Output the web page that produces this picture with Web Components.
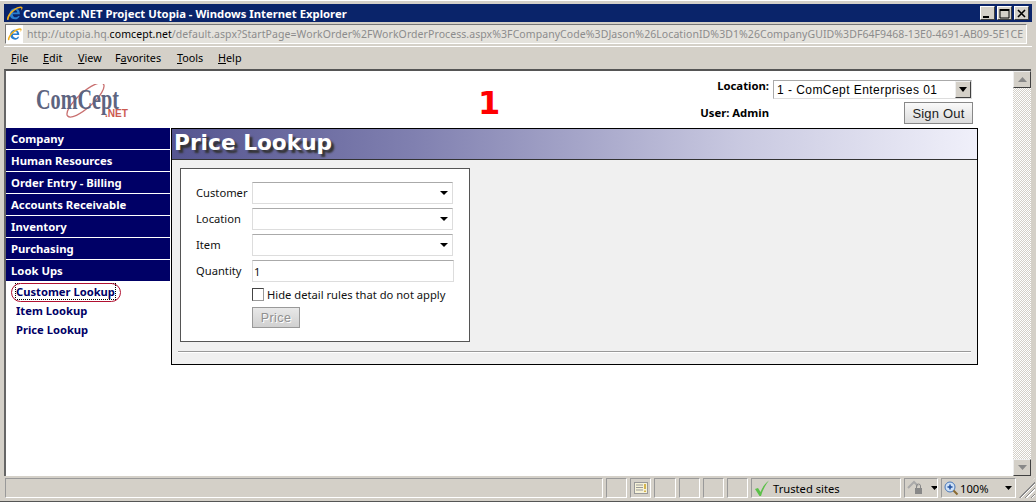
<!DOCTYPE html>
<html>
<head>
<meta charset="utf-8">
<title>Price Lookup</title>
<style>
  html, body { margin: 0; height: 502px; overflow: hidden; background: #d4d0c8; }
</style>
</head>
<body>
<ie-window>
  <cc-header></cc-header>
  <div style="display:flex; align-items:flex-start;">
    <cc-nav></cc-nav>
    <cc-panel heading="Price Lookup"><price-form></price-form></cc-panel>
  </div>
</ie-window>

<script>
const UI_FONT = '"Noto Sans", "DejaVu Sans", sans-serif';

const IE_ICON = (size) => `
  <svg width="${size}" height="${size}" viewBox="0 0 16 16">
    <path d="M3.400 9.400C3 5.600 5.400 3 8.400 3c2.900 0 4.700 2.200 4.700 5.600H6.300c.1 1.900 1.200 3 2.800 3 1.100 0 1.900-.5 2.500-1.300h1.300C12 12.600 10.500 13.500 8.700 13.500c-3 0-4.800-1.700-5.300-4.100zM6.300 7h4.300c-.1-1.500-.9-2.400-2.100-2.400S6.500 5.500 6.300 7z" fill="#2a7fd0"/>
    <path d="M1 13.800C.4 11 4.500 4.800 10.500 2.200c2.500-1.100 4.500-1.200 5-.2.3.700-.2 2-1.100 3.200.2-1.100.1-1.900-.3-2.200-1.600-1-8 2.600-10.400 7-1 1.800-1.300 3-1 3.700-.6.400-1.400.6-1.700.1z" fill="#f0b020"/>
  </svg>`;

class IeWindow extends HTMLElement {
  constructor() {
    super();
    this.attachShadow({ mode: 'open' });
    const menus = ['<u>F</u>ile:32', '<u>E</u>dit:35', '<u>V</u>iew:37', 'F<u>a</u>vorites:62', '<u>T</u>ools:41', '<u>H</u>elp:30'];
    const menuHtml = menus.map(m => {
      const [label, w] = m.split(':');
      return `<span style="width:${w}px">${label}</span>`;
    }).join('');
    this.shadowRoot.innerHTML = `
      <style>
        :host { display: flex; flex-direction: column; width: 1036px; height: 502px; box-sizing: border-box;
          padding: 3px 4px 3px 4px; background: #d4d0c8; font-family: ${UI_FONT};
          border-top: 1px solid #fff; border-bottom: 1px solid #555; }
        .title { height: 18px; flex: none; background: #0a246a; color: #fff; display: flex; align-items: center;
          font: bold 11.3px ${UI_FONT}; padding-left: 2px; }
        .title .ico { margin-right: 0; display: flex; }
        .title .t { flex: 1; white-space: nowrap; }
        .ctl { display: flex; gap: 2px; margin-right: 3px; }
        .ctl b { width: 15px; height: 14px; background: #d4d0c8; border: 1px solid; border-color: #fff #404040 #404040 #fff;
          display: flex; align-items: center; justify-content: center; box-sizing: border-box; }
        .addr { height: 20px; flex: none; margin: 2px 5px 0 1px; background: #e4e2dc; border: 1px solid; border-color: #777 #fff #fff #777;
          display: flex; align-items: center; overflow: hidden; box-sizing: border-box; color: #8c8c8c;
          font: 10.5px ${UI_FONT}; letter-spacing: .07px; white-space: nowrap; }
        .addr .fav { flex: none; width: 17px; height: 18px; background: #fff; display: flex; align-items: center; justify-content: center; margin-right: 4px; }
        .addr .txt { overflow: hidden; width: 997px; }
        .addr em { font-style: normal; color: #000; }
        .menu { height: 22px; flex: none; margin-top: 2px; display: flex; align-items: center; padding-left: 7px;
          font: 10.8px ${UI_FONT}; color: #000; border-top: 1px solid #fff; box-sizing: border-box; }
        .menu span { flex: none; white-space: nowrap; }
        .page { flex: 1; min-height: 0; display: flex; background: #fff; margin-top: 1px; margin-right: 1px; border-top: 2px solid #555; border-left: 2px solid #666; }
        .content { flex: 1; min-width: 0; position: relative; overflow: hidden; }
        .vbar { width: 18px; flex: none; display: flex; flex-direction: column; justify-content: space-between;
          background: repeating-conic-gradient(#d4d0c8 0 25%, #fff 0 50%) 0 0 / 2px 2px; }
        .vbar b { height: 17px; background: #d4d0c8; border: 1px solid; border-color: #eee #404040 #404040 #eee; box-sizing: border-box; display: flex; align-items: center; justify-content: center; }
        .status { height: 20px; flex: none; margin-top: 2px; display: flex; gap: 3px; font: 11.2px ${UI_FONT}; color: #000; padding-left: 1px; }
        .status > div { height: 20px; box-sizing: border-box; border: 1px solid; border-color: #999 #fff #fff #999; flex: none; display: flex; align-items: center; white-space: nowrap; }
        .grip { width: 16px; border: 0 !important; background: repeating-linear-gradient(135deg, transparent 0 2px, #888 2px 3px, #fff 3px 4px); clip-path: polygon(100% 0, 100% 100%, 0 100%); }
      </style>
      <div class="title">
        <span class="ico">${IE_ICON(17)}</span>
        <span class="t">ComCept .NET Project Utopia - Windows Internet Explorer</span>
        <span class="ctl">
          <b><svg width="11" height="11"><rect x="1" y="8" width="6" height="2" fill="#000"/></svg></b>
          <b><svg width="11" height="11"><path d="M1 1.500h9M1 1v9h9V1" fill="none" stroke="#000" stroke-width="1"/><rect x="1" y="1" width="9" height="2" fill="#000"/></svg></b>
          <b><svg width="11" height="11"><path d="M2 2l7 7M9 2l-7 7" stroke="#000" stroke-width="1.600"/></svg></b>
        </span>
      </div>
      <div class="addr">
        <span class="fav">${IE_ICON(15)}</span>
        <span class="txt">http://utopia.hq.<em>comcept.net</em>/default.aspx?StartPage=WorkOrder%2FWorkOrderProcess.aspx%3FCompanyCode%3DJason%26LocationID%3D1%26CompanyGUID%3DF64F9468-13E0-4691-AB09-5E1CE</span>
      </div>
      <div class="menu">${menuHtml}</div>
      <div class="page">
        <div class="content"><slot></slot></div>
        <div class="vbar">
          <b><svg width="9" height="6"><path d="M4.500 0L9 5H0z" fill="#888"/></svg></b>
          <b><svg width="9" height="6"><path d="M0 0h9L4.500 5z" fill="#888"/></svg></b>
        </div>
      </div>
      <div class="status">
        <div style="width:598px"></div>
        <div style="width:21px"></div>
        <div style="width:21px;justify-content:center"><svg width="14" height="14"><rect x=".5" y="1.500" width="13" height="11" fill="#f6f2d8" stroke="#999"/><path d="M2 4h7M2 6.500h7M2 9h7" stroke="#999"/><path d="M11 3v5M11 9.500v1.500" stroke="#c9a020" stroke-width="1.500"/></svg></div>
        <div style="width:22px"></div>
        <div style="width:21px"></div>
        <div style="width:21px"></div>
        <div style="width:21px"></div>
        <div style="width:150px;padding-left:1px"><svg width="18" height="18" viewBox="0 0 18 18" style="margin-right:2px"><path d="M2 10l3-1 2.500 4C9.500 8 12 4.500 16 1.500 12.500 6 10 10.500 8 17H6.500z" fill="#5cc04a"/></svg>Trusted sites</div>
        <div style="width:34px;padding-left:2px"><svg width="20" height="16"><path d="M1 8l6-6 4 4" fill="none" stroke="#aaa" stroke-width="2"/><rect x="8" y="8" width="7" height="6" fill="#888"/><path d="M9.500 8V6a2 2 0 0 1 4 0v2" fill="none" stroke="#888"/></svg><svg width="7" height="4" style="margin-left:5px"><path d="M0 0h7L3.500 4z" fill="#000"/></svg></div>
        <div style="width:75px;padding-left:2px"><svg width="15" height="15" style="margin-right:1px"><circle cx="6" cy="6" r="5" fill="#cfe2f7" stroke="#4a78b8"/><path d="M3.500 6h5M6 3.500v5" stroke="#1f4fa0" stroke-width="1.500"/><path d="M9.500 9.500l4 4" stroke="#8a6a30" stroke-width="2"/></svg>100%<svg width="7" height="4" style="margin-left:16px"><path d="M0 0h7L3.500 4z" fill="#000"/></svg></div>
        <div class="grip"></div>
      </div>
    `;
  }
}

class CcHeader extends HTMLElement {
  constructor() {
    super();
    this.attachShadow({ mode: 'open' });
    this.shadowRoot.innerHTML = `
      <style>
        :host { display: grid; height: 57px; grid-template-columns: 474px 293px 205px; grid-template-rows: 31px 26px;
          font: bold 11.3px ${UI_FONT}; color: #000; }
        .logo { grid-column: 1; grid-row: 1 / 3; padding: 13px 0 0 30px; }
        .num { grid-column: 2; grid-row: 1 / 3; font: bold 32px "DejaVu Sans", sans-serif; color: #f00; padding: 11px 0 0 0; line-height: 42px; margin-left: -2px; }
        .loc { grid-column: 2; grid-row: 1; text-align: right; padding: 7px 4px 0 0; }
        .sel { grid-column: 3; grid-row: 1; padding-top: 9px; }
        .sel div { width: 199px; height: 19px; border: 1px solid #ddd; border-top-color: #aaa; border-left-color: #aaa; box-sizing: border-box; background: #fff;
          display: flex; align-items: center; justify-content: space-between; padding-left: 3px;
          font: 12px "Liberation Sans", sans-serif; letter-spacing: .45px; }
        .sel b { width: 16px; height: 17px; background: #d4d0c8; border: 1px solid; border-color: #eee #404040 #404040 #eee; box-sizing: border-box; display: flex; align-items: center; justify-content: center; }
        .user { grid-column: 2; grid-row: 2; text-align: right; padding: 3px 4px 0 0; }
        .out { grid-column: 3; grid-row: 2; display: flex; justify-content: flex-end; align-items: flex-start; padding-right: 5px; }
        .out span { width: 69px; height: 22px; box-sizing: border-box; background: linear-gradient(#fafafa, #dcdcdc); border: 1px solid #888;
          font: 13px "Liberation Sans", sans-serif; letter-spacing: .2px; display: flex; align-items: center; justify-content: center; color: #222; }
      </style>
      <div class="logo">
        <svg width="130" height="40" viewBox="0 0 130 40">
          <ellipse cx="49.500" cy="16" rx="24" ry="7.500" transform="rotate(-42 49.500 16)" fill="none" stroke="#c97070" stroke-width="1.300"/>
          <text x="0" y="25" font-family="Liberation Serif" font-size="30" fill="#5d6480" textLength="83" lengthAdjust="spacingAndGlyphs">ComCept</text>
          <text x="69" y="33" font-family="Liberation Sans" font-weight="bold" font-size="11" fill="#cc5a50" textLength="23" lengthAdjust="spacingAndGlyphs">.NET</text>
        </svg>
      </div>
      <div class="num">1</div>
      <div class="loc">Location:</div>
      <div class="sel"><div>1 - ComCept Enterprises 01<b><svg width="8" height="5"><path d="M0 0h8L4 5z" fill="#000"/></svg></b></div></div>
      <div class="user">User: Admin</div>
      <div class="out"><span>Sign Out</span></div>
    `;
  }
}

class CcNav extends HTMLElement {
  constructor() {
    super();
    this.attachShadow({ mode: 'open' });
    const groups = ['Company', 'Human Resources', 'Order Entry - Billing', 'Accounts Receivable', 'Inventory', 'Purchasing', 'Look Ups'];
    this.shadowRoot.innerHTML = `
      <style>
        :host { display: block; width: 165px; flex: none; font: bold 11.3px ${UI_FONT}; }
        .g { height: 21px; margin-bottom: 1px; background: #000066; color: #fff; display: flex; align-items: center; padding-left: 5px; box-sizing: border-box; margin-right: 1px; }
        .subs { padding: 0 0 0 10px; position: relative; }
        .subs a { display: block; height: 19px; line-height: 19px; color: #000066; font-size: 11.200px; }
        .subs a.focus span { outline: 1px dotted #000; }
        .oval { position: absolute; left: 5px; top: 1px; width: 110px; height: 19px; box-sizing: border-box; border: 1px solid #b01030; border-radius: 10px; }
      </style>
      ${groups.map(g => `<div class="g">${g}</div>`).join('')}
      <div class="subs">
        <a class="focus"><span>Customer Lookup</span></a>
        <a>Item Lookup</a>
        <a>Price Lookup</a>
        <div class="oval"></div>
      </div>
    `;
  }
}

class CcPanel extends HTMLElement {
  constructor() {
    super();
    this.attachShadow({ mode: 'open' });
    this.shadowRoot.innerHTML = `
      <style>
        :host { display: block; width: 807px; box-sizing: border-box; border: 1px solid #000; background: #f0f0f0; }
        .head { height: 31px; box-sizing: border-box; border-bottom: 1px solid #333; padding: 0 0 0 2px;
          background: linear-gradient(90deg, #555590, #8080b0 30%, #c8c8e0 70%, #f0f0fa);
          font: bold 21.700px "DejaVu Sans", sans-serif; color: #fff; line-height: 27px; text-shadow: 3px 3px 2px #333; white-space: nowrap; }
        .body { padding: 8px 6px 11px 8px; }
        hr { margin: 9px 0 0 -2px; border: 0; border-top: 1px solid #999; border-bottom: 1px solid #fff; }
      </style>
      <div class="head"></div>
      <div class="body"><slot></slot><hr></div>
    `;
    this.shadowRoot.querySelector('.head').textContent = this.getAttribute('heading');
  }
}

class PriceForm extends HTMLElement {
  constructor() {
    super();
    this.attachShadow({ mode: 'open' });
    const combo = (label) => `
      <label>${label}</label>
      <div class="f"><svg width="8" height="4"><path d="M0 0h8L4 4z" fill="#000"/></svg></div>`;
    this.shadowRoot.innerHTML = `
      <style>
        :host { display: block; width: 290px; height: 174px; box-sizing: border-box; border: 1px solid #555; background: #fff;
          padding: 13px 0 0 15px; font: 11.200px ${UI_FONT}; color: #111; }
        .grid { display: grid; grid-template-columns: 56px 201px; grid-auto-rows: 22px; row-gap: 4px; align-items: center; }
        label { padding-bottom: 2px; }
        .f { height: 22px; width: 201px; box-sizing: border-box; border: 1px solid #ddd; border-top-color: #aaa; display: flex; align-items: center; justify-content: flex-end; padding-right: 4px; }
        .q { width: 202px; justify-content: flex-start; padding-left: 1px; }
        .chk { display: flex; align-items: center; margin: 5px 0 0 56px; height: 14px; white-space: nowrap; }
        .chk i { width: 12px; height: 13px; box-sizing: border-box; border: 1px solid #999; border-top-color: #444; border-left-color: #444; margin-right: 3px; }
        .btn { margin: 6px 0 0 56px; width: 48px; height: 21px; box-sizing: border-box; border: 1px solid #999; background: linear-gradient(#e8e8e8, #d0d0d0);
          color: #8f8f8f; font: 12.500px "Liberation Sans", sans-serif; letter-spacing: .4px; display: flex; align-items: center; justify-content: center; text-shadow: 1px 1px 0 #fff; }
      </style>
      <div class="grid">
        ${combo('Customer')}${combo('Location')}${combo('Item')}
        <label>Quantity</label><div class="f q">1</div>
      </div>
      <div class="chk"><i></i>Hide detail rules that do not apply</div>
      <div class="btn">Price</div>
    `;
  }
}

customElements.define('ie-window', IeWindow);
customElements.define('cc-header', CcHeader);
customElements.define('cc-nav', CcNav);
customElements.define('cc-panel', CcPanel);
customElements.define('price-form', PriceForm);
</script>
</body>
</html>
